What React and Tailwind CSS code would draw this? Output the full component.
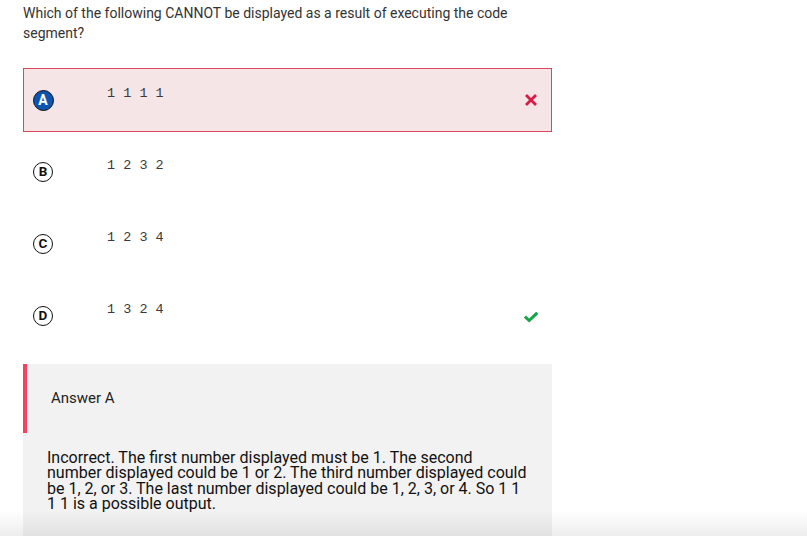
const options = [
  { letter: 'A', value: '1 1 1 1', state: 'wrong' },
  { letter: 'B', value: '1 2 3 2' },
  { letter: 'C', value: '1 2 3 4' },
  { letter: 'D', value: '1 3 2 4', state: 'correct' },
];

const Badge = ({ letter, selected }) => (
  <div
    className={
      selected
        ? 'flex h-[21px] w-[21px] items-center justify-center rounded-full border-[1.5px] border-[#111] bg-[#0b55b1] text-[14px] font-bold leading-none text-white'
        : 'flex h-[20px] w-[20px] items-center justify-center rounded-full border-[1.5px] border-[#111] bg-white text-[13.5px] font-bold leading-none text-[#111]'
    }
  >
    {letter}
  </div>
);

const CrossIcon = () => (
  <svg width="12" height="12" viewBox="0 0 12 12">
    <path d="M2 2 L10 10 M10 2 L2 10" stroke="#d81b45" strokeWidth="2.8" strokeLinecap="square" />
  </svg>
);

const CheckIcon = () => (
  <svg width="14" height="11" viewBox="0 0 14 11">
    <path d="M2 5.5 L5.2 8.5 L12.2 1.8" stroke="#14a548" strokeWidth="3" fill="none" strokeLinecap="square" />
  </svg>
);

const OptionRow = ({ option }) => {
  const wrong = option.state === 'wrong';
  return (
    <div
      className={
        'flex h-[64px] items-center pr-[10px] pl-[8px] ' +
        (wrong ? 'border border-[#e0445f] bg-[#f5e5e7]' : 'border border-transparent')
      }
    >
      <div className="flex w-[22px] justify-center">
        <Badge letter={option.letter} selected={wrong} />
      </div>
      <div className="ml-[53px] self-start pt-[17px] font-['Liberation_Mono',monospace] text-[13.5px] leading-[16px] text-[#3a3a3a]">
        {option.value}
      </div>
      <div className="ml-auto flex w-[20px] justify-center">
        {wrong && <CrossIcon />}
        {option.state === 'correct' && <div className="pt-[3px]"><CheckIcon /></div>}
      </div>
    </div>
  );
};

export default function App() {
  return (
    <div className="relative h-[536px] w-[807px] overflow-hidden bg-white font-['Roboto',sans-serif]">
      <div className="w-[552px] pt-[3px] pl-[23px]">
        <p className="text-[14px] leading-[20px] text-[#333]">
          Which of the following CANNOT be displayed as a result of executing the code segment?
        </p>

        <div className="mt-[25px] flex flex-col gap-[8px]">
          {options.map((o) => (
            <OptionRow key={o.letter} option={o} />
          ))}
        </div>

        <div className="mt-[16px] h-[200px] bg-[#f2f2f2]">
          <div className="flex h-[69px] items-center border-l-4 border-[#f73f61] pl-[24px] text-[15px] text-[#222]">
            Answer A
          </div>
          <p className="mt-[17px] pr-[22px] pl-[24px] text-[16px] leading-[15.4px] text-[#111]">
            Incorrect. The first number displayed must be 1. The second number displayed could be 1 or 2. The third number displayed could be 1, 2, or 3. The last number displayed could be 1, 2, 3, or 4. So 1 1 1 1 is a possible output.
          </p>
        </div>
      </div>
      <div className="pointer-events-none absolute right-0 bottom-0 left-0 h-[26px] bg-gradient-to-b from-transparent to-black/[0.07]" />
    </div>
  );
}
